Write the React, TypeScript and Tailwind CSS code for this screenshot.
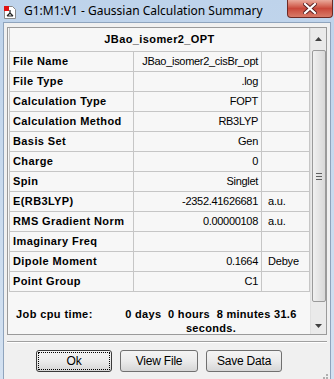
import React from 'react';

const rows: { label: string; value: string; unit?: string }[] = [
  { label: 'File Name', value: 'JBao_isomer2_cisBr_opt' },
  { label: 'File Type', value: '.log' },
  { label: 'Calculation Type', value: 'FOPT' },
  { label: 'Calculation Method', value: 'RB3LYP' },
  { label: 'Basis Set', value: 'Gen' },
  { label: 'Charge', value: '0' },
  { label: 'Spin', value: 'Singlet' },
  { label: 'E(RB3LYP)', value: '-2352.41626681', unit: 'a.u.' },
  { label: 'RMS Gradient Norm', value: '0.00000108', unit: 'a.u.' },
  { label: 'Imaginary Freq', value: '' },
  { label: 'Dipole Moment', value: '0.1664', unit: 'Debye' },
  { label: 'Point Group', value: 'C1' },
];

const AppIcon = () => (
  <svg width="12" height="13" viewBox="0 0 12 13" className="shrink-0">
    <path d="M0.5 0.5h8l3 3v9h-11z" fill="#fff" stroke="#8a8a8a" />
    <rect x="0" y="0" width="5" height="5" fill="#e01010" />
    <path d="M6 4v3M6 7l-3 3M6 7l3 3M3 10h6" stroke="#222" strokeWidth="1.2" fill="none" />
  </svg>
);

const Button = ({ label, width, focused }: { label: string; width: string; focused?: boolean }) => (
  <button
    className={
      'h-[22px] p-[1px] rounded-[3px] border text-[12px] text-black whitespace-nowrap bg-gradient-to-b from-[#f4f4f4] via-[#ebebeb] to-[#d6d6d6] flex ' +
      width +
      (focused ? ' border-[#3a3a3a]' : ' border-[#707070]')
    }
  >
    <span
      className={
        'flex-1 flex items-center justify-center tracking-[-0.2px] ' +
        (focused ? 'border border-dotted border-black' : '')
      }
    >
      {label}
    </span>
  </button>
);

export default function App() {
  return (
    <div className="w-[334px] h-[379px] bg-gradient-to-b from-[#bed3eb] to-[#d3e1f1] flex flex-col font-['Liberation_Sans',Arial,sans-serif] overflow-hidden">
      {/* Title bar */}
      <div className="h-[22px] flex items-start pl-[4px] pr-[1px] shrink-0">
        <div className="mt-[6px]">
          <AppIcon />
        </div>
        <span className="ml-[8px] mt-[3px] text-[12px] text-black font-['Noto_Sans',sans-serif] leading-[16px]">
          G1:M1:V1 - Gaussian Calculation Summary
        </span>
        <div className="ml-auto w-[46px] h-[18px] rounded-b-[4px] border border-t-0 border-[#6d2a24] bg-gradient-to-b from-[#e9a99b] via-[#c9483a] to-[#d87a68] flex items-center justify-center">
          <svg width="14" height="11" viewBox="0 0 14 11">
            <path d="M2 1l10 9M12 1L2 10" stroke="#5a2020" strokeWidth="4" strokeLinecap="square" />
            <path d="M2 1l10 9M12 1L2 10" stroke="#fff" strokeWidth="2.2" strokeLinecap="square" />
          </svg>
        </div>
      </div>

      {/* Client area */}
      <div className="mx-[3px] mb-[3px] flex-1 border border-[#8fa4bd] bg-[#f0f0f0] flex flex-col">
        <div className="mt-[4px] mx-[3px] h-[308px] border border-[#9a9a9a] bg-[#f7f7f7] flex">
          <div className="flex-1 flex flex-col pl-[1px]">
            <div className="border-l border-r border-[#c6c6c6]">
              <div className="h-[24px] flex items-center justify-center text-[11px] font-bold tracking-[0.4px] text-black border-b border-[#c6c6c6]">
                JBao_isomer2_OPT
              </div>
              {rows.map((r) => (
                <div key={r.label} className="h-[20px] flex border-b border-[#c6c6c6] text-[11px] text-black">
                  <div className="w-[124px] border-r border-[#c6c6c6] flex items-center pl-[3px] font-bold tracking-[0.4px]">
                    {r.label}
                  </div>
                  <div className="w-[128px] border-r border-[#c6c6c6] flex items-center justify-end pr-[3px] tracking-[-0.3px]">
                    {r.value}
                  </div>
                  <div className="flex-1 flex items-center pl-[6px] tracking-[-0.2px]">{r.unit}</div>
                </div>
              ))}
            </div>
            <div className="flex text-[11px] font-bold text-black pt-[15px] leading-[14px]">
              <div className="w-[112px] pl-[7px] tracking-[0.4px]">Job cpu time:</div>
              <div className="w-[180px] text-center whitespace-pre-wrap tracking-[0.3px]">
                {'0 days  0 hours  8 minutes 31.6 seconds.'}
              </div>
            </div>
          </div>
          {/* Scrollbar */}
          <div className="w-[16px] bg-[#eaeaea] border-l border-[#e0e0e0] flex flex-col items-center">
            <div className="h-[22px] flex items-center justify-center">
              <svg width="7" height="4" viewBox="0 0 7 4">
                <path d="M0 4L3.5 0L7 4z" fill="#404040" />
              </svg>
            </div>
            <div className="w-[14px] h-[252px] rounded-[2px] border border-[#9a9a9a] bg-gradient-to-r from-[#f0f0f0] to-[#d8d8d8] flex items-center justify-center">
              <div className="flex flex-col gap-[2px]">
                <div className="w-[6px] h-px bg-[#606060]" />
                <div className="w-[6px] h-px bg-[#606060]" />
                <div className="w-[6px] h-px bg-[#606060]" />
              </div>
            </div>
            <div className="flex-1 flex items-end justify-center pb-[6px]">
              <svg width="7" height="4" viewBox="0 0 7 4">
                <path d="M0 0L3.5 4L7 0z" fill="#404040" />
              </svg>
            </div>
          </div>
        </div>
        <div className="mt-[6px] mx-[3px] h-[2px] border-t border-[#a0a0a0] border-b border-b-white" />
        <div className="mt-[7px] flex gap-[8px] pl-[32px]">
          <Button label="Ok" width="w-[76px]" focused />
          <Button label="View File" width="w-[78px]" />
          <Button label="Save Data" width="w-[76px]" />
        </div>
        <div className="flex-1 flex items-end justify-end pr-[2px] pb-[2px]">
          <svg width="10" height="10" viewBox="0 0 10 10">
            <g fill="#b0b0b0">
              <rect x="8" y="2" width="2" height="2" />
              <rect x="5" y="5" width="2" height="2" />
              <rect x="8" y="5" width="2" height="2" />
              <rect x="2" y="8" width="2" height="2" />
              <rect x="5" y="8" width="2" height="2" />
              <rect x="8" y="8" width="2" height="2" />
            </g>
          </svg>
        </div>
      </div>
    </div>
  );
}
